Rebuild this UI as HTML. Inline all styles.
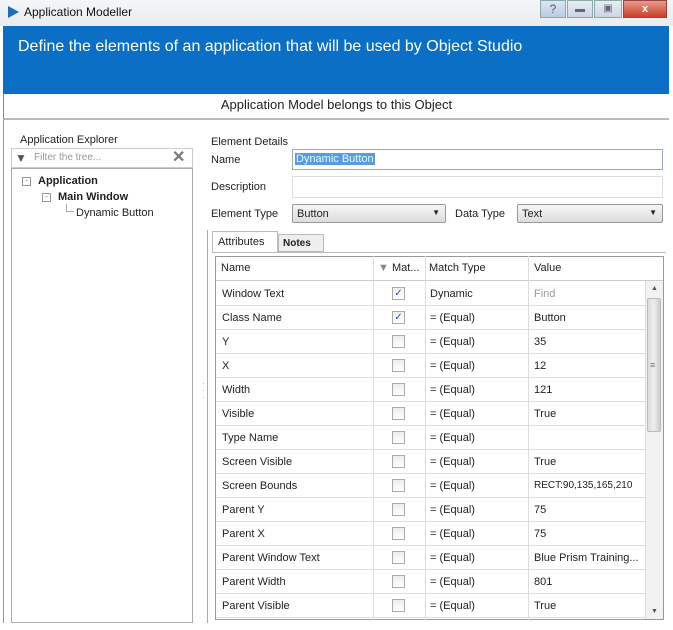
<!DOCTYPE html>
<html><head><style>
*{margin:0;padding:0;box-sizing:border-box}
body{width:673px;height:630px;background:#fff;font-family:"Liberation Sans",sans-serif;font-size:11px;color:#222;position:relative;overflow:hidden}
.a{position:absolute}
.row{position:absolute;left:216px;width:429px;height:24px;border-bottom:1px solid #ddd}
.row span{position:absolute;top:6px}
.cb{position:absolute;left:176px;top:5px;width:13px;height:13px;border:1px solid #aaa;background:linear-gradient(#eee,#fff);font-size:10px;color:#35a;text-align:center;line-height:11px}
.vl{position:absolute;top:256px;height:364px;border-left:1px solid #ddd}
</style></head><body>
<div class="a" style="left:0;top:0;width:673px;height:26px;background:linear-gradient(#f4f6f8,#e8ecef)"></div>
<div class="a" style="left:8px;top:6px;width:0;height:0;border-left:11px solid #1a6fb8;border-top:6px solid transparent;border-bottom:6px solid transparent"></div>
<div class="a" style="left:24px;top:5px;font-size:12px;color:#111">Application Modeller</div>
<div class="a" style="left:540px;top:0;width:26px;height:18px;background:linear-gradient(#dbe6f1,#b9cde2);border:1px solid #8aa;color:#557;text-align:center;font-size:12px;line-height:16px">?</div>
<div class="a" style="left:567px;top:0;width:26px;height:18px;background:linear-gradient(#e8eef4,#c9d6e3);border:1px solid #8aa;text-align:center;font-size:10px;color:#667;line-height:18px">▬</div>
<div class="a" style="left:594px;top:0;width:28px;height:18px;background:linear-gradient(#e8eef4,#c9d6e3);border:1px solid #8aa;text-align:center;font-size:10px;color:#667;line-height:16px">▣</div>
<div class="a" style="left:623px;top:0;width:44px;height:18px;background:linear-gradient(#e99a8a,#c8402a);border:1px solid #944;text-align:center;color:#fff;font-weight:bold;font-size:11px;line-height:16px">x</div>
<div class="a" style="left:3px;top:26px;width:666px;height:68px;background:#0a6fc5"></div>
<div class="a" style="left:18px;top:38px;font-size:16px;color:#fff">Define the elements of an application that will be used by Object Studio</div>
<div class="a" style="left:3px;top:94px;width:666px;height:26px;border-left:1px solid #888;border-bottom:2px solid #bbb"></div>
<div class="a" style="left:0;top:97px;width:673px;text-align:center;font-size:13px">Application Model belongs to this Object</div>
<div class="a" style="left:3px;top:120px;height:503px;border-left:1px solid #999"></div>
<div class="a" style="left:20px;top:134px">Application Explorer</div>
<div class="a" style="left:11px;top:148px;width:182px;height:20px;border:1px solid #ccc"></div>
<div class="a" style="left:15px;top:151px;color:#555;font-size:12px">▼</div>
<div class="a" style="left:34px;top:152px;color:#999;font-size:10px">Filter the tree...</div>
<div class="a" style="left:172px;top:147px;color:#777;font-size:16px;font-weight:bold">✕</div>
<div class="a" style="left:11px;top:168px;width:182px;height:455px;border:1px solid #aaa"></div>
<div class="a" style="left:22px;top:177px;width:9px;height:9px;border:1px solid #999;font-size:8px;line-height:6px;text-align:center;color:#555">-</div>
<div class="a" style="left:38px;top:175px;font-weight:bold">Application</div>
<div class="a" style="left:42px;top:193px;width:9px;height:9px;border:1px solid #999;font-size:8px;line-height:6px;text-align:center;color:#555">-</div>
<div class="a" style="left:58px;top:191px;font-weight:bold">Main Window</div>
<div class="a" style="left:66px;top:204px;width:8px;height:8px;border-left:1px solid #aaa;border-bottom:1px solid #aaa"></div>
<div class="a" style="left:76px;top:207px">Dynamic Button</div>
<div class="a" style="left:202px;top:380px;color:#999;font-size:8px;line-height:7px">·<br>·<br>·</div>
<div class="a" style="left:207px;top:230px;height:393px;border-left:1px solid #aaa"></div>
<div class="a" style="left:211px;top:136px">Element Details</div>
<div class="a" style="left:211px;top:154px">Name</div>
<div class="a" style="left:292px;top:149px;width:371px;height:21px;border:1px solid #9ab"></div>
<div class="a" style="left:295px;top:153px;background:#5a9be0;color:#dfe;padding:0 1px">Dynamic Button</div>
<div class="a" style="left:211px;top:181px">Description</div>
<div class="a" style="left:292px;top:176px;width:371px;height:22px;border:1px solid #ddd"></div>
<div class="a" style="left:211px;top:208px">Element Type</div>
<div class="a" style="left:292px;top:204px;width:154px;height:19px;border:1px solid #999;border-radius:2px;background:linear-gradient(#f6f6f6,#ddd);padding:3px 4px">Button<span style="position:absolute;right:5px;top:3px;font-size:8px">▼</span></div>
<div class="a" style="left:455px;top:208px">Data Type</div>
<div class="a" style="left:517px;top:204px;width:146px;height:19px;border:1px solid #999;border-radius:2px;background:linear-gradient(#f6f6f6,#ddd);padding:3px 4px">Text<span style="position:absolute;right:5px;top:3px;font-size:8px">▼</span></div>
<div class="a" style="left:212px;top:231px;width:66px;height:21px;border:1px solid #bbb;border-bottom:none;background:#fff;padding:4px 5px">Attributes</div>
<div class="a" style="left:278px;top:234px;width:46px;height:18px;border:1px solid #bbb;background:#eee;padding:3px 4px;font-weight:bold;font-size:10px">Notes</div>
<div class="a" style="left:212px;top:252px;width:454px;border-top:1px solid #bbb"></div>
<div class="a" style="left:215px;top:256px;width:449px;height:364px;border:1px solid #999"></div>
<div class="a" style="left:216px;top:257px;width:447px;height:24px;border-bottom:1px solid #ccc"></div>
<div class="a" style="left:221px;top:262px">Name</div>
<div class="a" style="left:378px;top:262px"><span style="color:#888">▼</span> Mat...</div>
<div class="a" style="left:429px;top:262px">Match Type</div>
<div class="a" style="left:534px;top:262px">Value</div>
<div class="vl" style="left:373px"></div><div class="vl" style="left:425px"></div><div class="vl" style="left:528px"></div>
<div class="a" style="left:645px;top:281px;width:18px;height:338px;background:#f2f2f2;border-left:1px solid #ddd"></div>
<div class="a" style="left:647px;top:298px;width:14px;height:134px;background:linear-gradient(90deg,#ddd,#eee,#ccc);border:1px solid #bbb;border-radius:2px"></div>
<div class="a" style="left:651px;top:285px;font-size:7px;color:#555">▲</div>
<div class="a" style="left:651px;top:608px;font-size:7px;color:#555">▼</div>
<div class="a" style="left:650px;top:360px;font-size:9px;color:#777">≡</div>
<div class="row" style="top:282px"><span style="left:6px">Window Text</span><div class="cb">✓</div><span style="left:214px">Dynamic</span><span style="left:318px;color:#999">Find</span></div>
<div class="row" style="top:306px"><span style="left:6px">Class Name</span><div class="cb">✓</div><span style="left:214px">= (Equal)</span><span style="left:318px">Button</span></div>
<div class="row" style="top:330px"><span style="left:6px">Y</span><div class="cb"></div><span style="left:214px">= (Equal)</span><span style="left:318px">35</span></div>
<div class="row" style="top:354px"><span style="left:6px">X</span><div class="cb"></div><span style="left:214px">= (Equal)</span><span style="left:318px">12</span></div>
<div class="row" style="top:378px"><span style="left:6px">Width</span><div class="cb"></div><span style="left:214px">= (Equal)</span><span style="left:318px">121</span></div>
<div class="row" style="top:402px"><span style="left:6px">Visible</span><div class="cb"></div><span style="left:214px">= (Equal)</span><span style="left:318px">True</span></div>
<div class="row" style="top:426px"><span style="left:6px">Type Name</span><div class="cb"></div><span style="left:214px">= (Equal)</span></div>
<div class="row" style="top:450px"><span style="left:6px">Screen Visible</span><div class="cb"></div><span style="left:214px">= (Equal)</span><span style="left:318px">True</span></div>
<div class="row" style="top:474px"><span style="left:6px">Screen Bounds</span><div class="cb"></div><span style="left:214px">= (Equal)</span><span style="left:318px;font-size:10px">RECT:90,135,165,210</span></div>
<div class="row" style="top:498px"><span style="left:6px">Parent Y</span><div class="cb"></div><span style="left:214px">= (Equal)</span><span style="left:318px">75</span></div>
<div class="row" style="top:522px"><span style="left:6px">Parent X</span><div class="cb"></div><span style="left:214px">= (Equal)</span><span style="left:318px">75</span></div>
<div class="row" style="top:546px"><span style="left:6px">Parent Window Text</span><div class="cb"></div><span style="left:214px">= (Equal)</span><span style="left:318px">Blue Prism Training...</span></div>
<div class="row" style="top:570px"><span style="left:6px">Parent Width</span><div class="cb"></div><span style="left:214px">= (Equal)</span><span style="left:318px">801</span></div>
<div class="row" style="top:594px"><span style="left:6px">Parent Visible</span><div class="cb"></div><span style="left:214px">= (Equal)</span><span style="left:318px">True</span></div>
</body></html>
